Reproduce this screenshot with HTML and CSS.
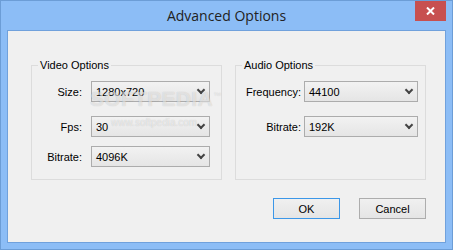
FILE: index.html
```html
<!DOCTYPE html>
<html lang="en">
<head>
    <meta charset="UTF-8">
    <title>Advanced Options</title>
    <link rel="stylesheet" href="styles.css">
</head>
<body>
    <div class="window">
        <div class="titlebar">
            <span></span>
            <div class="title">Advanced Options</div>
            <button class="close-button" title="Close">
                <svg width="9" height="8" viewBox="0 0 9 8">
                    <path d="M1 0.5 L8 7.5 M8 0.5 L1 7.5" stroke="#fff" stroke-width="2" fill="none"/>
                </svg>
            </button>
        </div>

        <div class="client">
            <div class="groups">
                <fieldset class="group group-video">
                    <legend>Video Options</legend>
                    <div class="field">
                        <label class="label">Size:</label>
                        <div class="combo"><span>1280x720</span><span class="arrow"></span></div>
                    </div>
                    <div class="field field-loose">
                        <label class="label">Fps:</label>
                        <div class="combo"><span>30</span><span class="arrow"></span></div>
                    </div>
                    <div class="field field-tight">
                        <label class="label">Bitrate:</label>
                        <div class="combo"><span>4096K</span><span class="arrow"></span></div>
                    </div>
                </fieldset>

                <fieldset class="group group-audio">
                    <legend>Audio Options</legend>
                    <div class="field">
                        <label class="label">Frequency:</label>
                        <div class="combo"><span>44100</span><span class="arrow"></span></div>
                    </div>
                    <div class="field field-loose">
                        <label class="label">Bitrate:</label>
                        <div class="combo"><span>192K</span><span class="arrow"></span></div>
                    </div>
                </fieldset>
            </div>

            <div class="button-row">
                <button class="button button-default">OK</button>
                <button class="button">Cancel</button>
            </div>

            <!-- softpedia watermark sits over the combos -->
            <div class="watermark">
                <div class="watermark-big">SOFTPEDIA<sup>™</sup></div>
                <div class="watermark-small">www.softpedia.com</div>
            </div>
        </div>
    </div>
</body>
</html>
```

FILE: styles.css
```css
* {
    box-sizing: border-box;
}
body {
    margin: 0;
    padding: 0;
    background-color: #8cbdf6;
    font-family: "Liberation Sans", Arial, sans-serif;
    font-size: 11px;
    color: #000;
}
.window {
    width: 453px;
    height: 250px;
    border: 1px solid #6c9dd6;
    background-color: #8cbdf6;
    padding: 0 6px 6px 6px;
    display: flex;
    flex-direction: column;
}
.titlebar {
    height: 29px;
    display: grid;
    grid-template-columns: 1fr auto 1fr;
}
.title {
    font-family: "Open Sans", "Noto Sans", sans-serif;
    font-size: 14px;
    color: #222;
    padding-top: 5px;
}
.close-button {
    justify-self: end;
    width: 31px;
    height: 20px;
    border: none;
    padding: 0;
    background-color: #c75050;
    display: flex;
    align-items: center;
    justify-content: center;
}
.client {
    position: relative;
    flex: 1;
    border: 1px solid #70a1dc;
    background-color: #f0f0f0;
    padding: 28px 19px 0 23px;
}
.groups {
    display: flex;
    gap: 13px;
}
.group {
    width: 191px;
    margin: 0;
    padding: 9px 0 12px 0;
    border: 1px solid #dcdcdc;
    min-width: 0;
}
.group legend {
    margin-left: 6px;
    padding: 0 2px;
    line-height: 13px;
}
.field {
    display: flex;
    align-items: center;
}
.field-loose {
    margin-top: 14px;
}
.field-tight {
    margin-top: 9px;
}
.label {
    text-align: right;
}
.group-video .label {
    width: 50px;
    margin-right: 9px;
}
.group-video .combo {
    width: 119px;
}
.group-audio .label {
    width: 65px;
    margin-right: 3px;
}
.group-audio .combo {
    width: 114px;
}
.combo {
    height: 21px;
    border: 1px solid #acacac;
    background: linear-gradient(#f2f2f2, #e5e5e5);
    display: flex;
    align-items: center;
    justify-content: space-between;
    padding: 0 4px 0 4px;
}
.arrow {
    width: 6px;
    height: 6px;
    border-right: 2px solid #444;
    border-bottom: 2px solid #444;
    transform: rotate(45deg);
    margin: -3px 1px 0 0;
}
.button-row {
    display: flex;
    justify-content: flex-end;
    gap: 19px;
    margin-top: 18px;
}
.button {
    width: 67px;
    height: 21px;
    border: 1px solid #adadad;
    background: linear-gradient(#f0f0f0, #e5e5e5);
    font-family: "Liberation Sans", Arial, sans-serif;
    font-size: 11px;
    color: #000;
    padding: 0;
}
.button-default {
    border-color: #3c97e8;
}
.watermark {
    position: absolute;
    left: 82px;
    top: 54px;
    color: rgba(255, 255, 255, 0.55);
    text-shadow: 0 0 1px rgba(0, 0, 0, 0.2);
    pointer-events: none;
}
.watermark-big {
    font-size: 21px;
    font-weight: bold;
    letter-spacing: 0.3px;
    line-height: 22px;
}
.watermark-big sup {
    font-size: 8px;
    font-weight: normal;
}
.watermark-small {
    font-size: 10px;
    margin: 7px 0 0 21px;
}
```
